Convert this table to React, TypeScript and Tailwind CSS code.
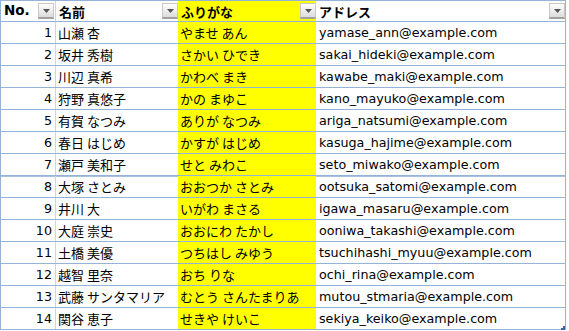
import React from 'react';

const rows: [string, string, string][] = [
  ['山瀬 杏', 'やませ あん', 'yamase_ann@example.com'],
  ['坂井 秀樹', 'さかい ひでき', 'sakai_hideki@example.com'],
  ['川辺 真希', 'かわべ まき', 'kawabe_maki@example.com'],
  ['狩野 真悠子', 'かの まゆこ', 'kano_mayuko@example.com'],
  ['有賀 なつみ', 'ありが なつみ', 'ariga_natsumi@example.com'],
  ['春日 はじめ', 'かすが はじめ', 'kasuga_hajime@example.com'],
  ['瀬戸 美和子', 'せと みわこ', 'seto_miwako@example.com'],
  ['大塚 さとみ', 'おおつか さとみ', 'ootsuka_satomi@example.com'],
  ['井川 大', 'いがわ まさる', 'igawa_masaru@example.com'],
  ['大庭 崇史', 'おおにわ たかし', 'ooniwa_takashi@example.com'],
  ['土橋 美優', 'つちはし みゆう', 'tsuchihashi_myuu@example.com'],
  ['越智 里奈', 'おち りな', 'ochi_rina@example.com'],
  ['武藤 サンタマリア', 'むとう さんたまりあ', 'mutou_stmaria@example.com'],
  ['関谷 恵子', 'せきや けいこ', 'sekiya_keiko@example.com'],
];

const jp = "font-['Noto_Sans_CJK_JP',sans-serif]";
const latin = "font-['DejaVu_Sans',sans-serif]";

function FilterButton() {
  return (
    <div className="w-[16px] h-[16px] border border-[#c8c8c8] border-b-2 border-b-[#a0a0a0] bg-gradient-to-b from-white to-[#dcdcdc] flex items-center justify-center">
      <svg width="7" height="4" viewBox="0 0 7 4">
        <path d="M0 0h7L3.5 4z" fill="#555" />
      </svg>
    </div>
  );
}

function HeaderCell({ label, className = '', font = jp }: { label: string; className?: string; font?: string }) {
  return (
    <div className={`flex items-center justify-between pl-[3px] pr-0 ${className}`}>
      <span className={`${font} text-[13px] font-bold text-black leading-none`}>{label}</span>
      <FilterButton />
    </div>
  );
}

export default function App() {
  return (
    <div className="w-[569px] h-[331px] bg-white">
      <div className="w-[566px] border border-b-0 border-[#95b3d7] relative">
        <div className="grid grid-cols-[55px_122px_138px_249px] h-[21px] border-b border-[#95b3d7]">
          <HeaderCell label="No." font={`${latin} !text-[13.5px]`} className="border-r border-[#d4d4d4] pr-[1px]" />
          <HeaderCell label="名前" className="pl-[2px]" />
          <HeaderCell label="ふりがな" className="bg-[#ffff00] pl-[2px]" />
          <HeaderCell label="アドレス" className="pl-[3px]" />
        </div>
        {rows.map(([name, kana, mail], i) => (
          <div
            key={i}
            className={`grid grid-cols-[55px_122px_138px_249px] h-[22px] border-b border-[#95b3d7] ${
              i === 7 ? 'shadow-[inset_0_1px_0_#a9c1df]' : ''
            }`}
          >
            <div className={`border-r border-[#d4d4d4] flex items-center justify-end pr-[3px] ${latin} text-[12.7px] text-black`}>
              {i + 1}
            </div>
            <div className={`flex items-center pl-[2px] ${jp} text-[13px] text-black whitespace-nowrap`}>{name}</div>
            <div className={`flex items-center pl-[2px] bg-[#ffff00] ${jp} text-[13px] text-black whitespace-nowrap`}>{kana}</div>
            <div className={`flex items-center pl-[3px] ${latin} text-[12.7px] text-black whitespace-nowrap`}>{mail}</div>
          </div>
        ))}
        <svg className="absolute right-0 bottom-0" width="4" height="4" viewBox="0 0 4 4">
          <path d="M4 0v4H0V2h2V0z" fill="#3f5fae" />
        </svg>
      </div>
    </div>
  );
}
